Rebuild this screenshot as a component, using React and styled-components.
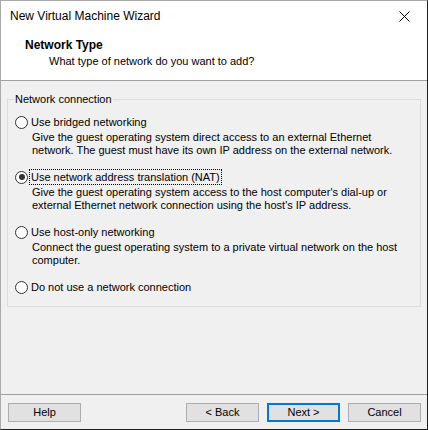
import React, { useState } from "react";
import styled, { createGlobalStyle } from "styled-components";

const GlobalStyle = createGlobalStyle`
  html, body {
    margin: 0;
    padding: 0;
    background: #f0f0f0;
  }
  * {
    box-sizing: border-box;
  }
`;

const options = [
  {
    id: "bridged",
    label: "Use bridged networking",
    desc: "Give the guest operating system direct access to an external Ethernet network. The guest must have its own IP address on the external network.",
  },
  {
    id: "nat",
    label: "Use network address translation (NAT)",
    desc: "Give the guest operating system access to the host computer's dial-up or external Ethernet network connection using the host's IP address.",
  },
  {
    id: "hostonly",
    label: "Use host-only networking",
    desc: "Connect the guest operating system to a private virtual network on the host computer.",
  },
  {
    id: "none",
    label: "Do not use a network connection",
  },
];

function CloseIcon() {
  return (
    <svg width="11" height="11" viewBox="0 0 11 11">
      <path d="M0.5 0.5 L10.5 10.5 M10.5 0.5 L0.5 10.5" stroke="#000" strokeWidth="1" fill="none" />
    </svg>
  );
}

function App() {
  const [network, setNetwork] = useState("nat");

  return (
    <>
      <GlobalStyle />
      <Window>
        <TitleBar>
          <Title>New Virtual Machine Wizard</Title>
          <CloseButton>
            <CloseIcon />
          </CloseButton>
        </TitleBar>
        <Header>
          <HeaderTitle>Network Type</HeaderTitle>
          <HeaderSub>What type of network do you want to add?</HeaderSub>
        </Header>
        <Body>
          <GroupBox>
            <Legend>Network connection</Legend>
            {options.map((o) => (
              <Option key={o.id}>
                <RadioRow onClick={() => setNetwork(o.id)}>
                  <Radio $checked={network === o.id} />
                  <RadioLabel $focused={network === o.id}>{o.label}</RadioLabel>
                </RadioRow>
                {o.desc && <Desc>{o.desc}</Desc>}
              </Option>
            ))}
          </GroupBox>
        </Body>
        <Footer>
          <Button>Help</Button>
          <Spacer />
          <Button>&lt; Back</Button>
          <Button $default>Next &gt;</Button>
          <Button>Cancel</Button>
        </Footer>
      </Window>
    </>
  );
}

const Window = styled.div`
  width: 428px;
  height: 430px;
  display: flex;
  flex-direction: column;
  border-left: 1px solid #aaaaaa;
  border-top: 1px solid #aaaaaa;
  border-right: 1px solid #1f1f1f;
  border-bottom: 1px solid #1f1f1f;
  background: #f0f0f0;
  font-family: "Liberation Sans", Arial, sans-serif;
  font-size: 11px;
  color: #000;
`;

const TitleBar = styled.div`
  height: 30px;
  display: flex;
  align-items: center;
  justify-content: space-between;
  padding-left: 9px;
  background: #fff;
`;

const Title = styled.div`
  font-size: 12px;
  line-height: 15px;
`;

const CloseButton = styled.div`
  width: 46px;
  height: 30px;
  display: flex;
  align-items: center;
  justify-content: center;
`;

const Header = styled.div`
  height: 50px;
  background: #fff;
  padding: 7px 0 0 24px;
  border-bottom: 1px solid #a0a0a0;
`;

const HeaderTitle = styled.div`
  font-size: 12px;
  font-weight: bold;
  line-height: 15px;
`;

const HeaderSub = styled.div`
  line-height: 15px;
  margin-top: 1px;
  padding-left: 24px;
`;

const Body = styled.div`
  flex: 1;
  padding: 11px 6px 0 6px;
  border-bottom: 1px solid #a0a0a0;
`;

const GroupBox = styled.fieldset`
  margin: 0;
  padding: 7px 8px 11px 7px;
  border: 1px solid #dcdcdc;
  min-width: 0;
`;

const Legend = styled.legend`
  padding: 0 1px;
  margin-left: -1px;
  line-height: 15px;
`;

const Option = styled.div`
  & + & {
    margin-top: 12px;
  }
`;

const RadioRow = styled.div`
  display: flex;
  align-items: center;
  height: 16px;
`;

const Radio = styled.span`
  width: 13px;
  height: 13px;
  border-radius: 50%;
  border: 1px solid #333;
  background: #fff;
  position: relative;
  flex-shrink: 0;

  &::after {
    content: "";
    display: ${(p) => (p.$checked ? "block" : "none")};
    position: absolute;
    left: 2.5px;
    top: 2.5px;
    width: 6px;
    height: 6px;
    border-radius: 50%;
    background: #333;
  }
`;

const RadioLabel = styled.span`
  margin-left: 2px;
  padding: 0 1px;
  line-height: 14px;
  outline: ${(p) => (p.$focused ? "1px dotted #000" : "none")};
`;

const Desc = styled.div`
  margin-top: 1px;
  padding-left: 17px;
  line-height: 13px;
`;

const Footer = styled.div`
  height: 34px;
  display: flex;
  align-items: flex-start;
  gap: 8px;
  padding: 8px 6px 0 7px;
`;

const Spacer = styled.div`
  flex: 1;
`;

const Button = styled.div`
  width: 73px;
  height: 19px;
  display: flex;
  align-items: center;
  justify-content: center;
  background: #e1e1e1;
  border: ${(p) => (p.$default ? "2px solid #0078d7" : "1px solid #adadad")};
  line-height: 15px;
`;

export default App;
